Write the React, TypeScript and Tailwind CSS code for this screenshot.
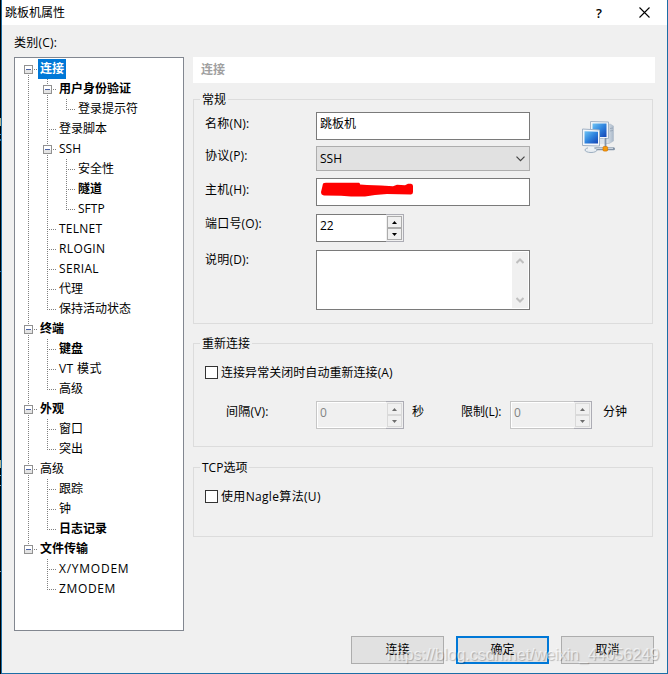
import * as React from 'react';
import clsx from 'clsx';

type Node = {
	name: string;
	bold?: boolean;
	selected?: boolean;
	className?: string;
	children?: Node[];
};

const tree: Node[] = [
	{
		name: '连接',
		selected: true,
		children: [
			{ name: '用户身份验证', bold: true, children: [{ name: '登录提示符' }] },
			{ name: '登录脚本' },
			{
				name: 'SSH',
				children: [{ name: '安全性' }, { name: '隧道', bold: true }, { name: 'SFTP' }],
			},
			{ name: 'TELNET', className: 'tracking-[.25px]' },
			{ name: 'RLOGIN', className: 'tracking-[.4px]' },
			{ name: 'SERIAL', className: 'tracking-[.35px]' },
			{ name: '代理' },
			{ name: '保持活动状态' },
		],
	},
	{
		name: '终端',
		bold: true,
		children: [
			{ name: '键盘', bold: true },
			{ name: 'VT 模式', className: 'tracking-[.4px]' },
			{ name: '高级' },
		],
	},
	{ name: '外观', bold: true, children: [{ name: '窗口' }, { name: '突出' }] },
	{
		name: '高级',
		children: [{ name: '跟踪' }, { name: '钟' }, { name: '日志记录', bold: true }],
	},
	{
		name: '文件传输',
		bold: true,
		children: [
			{ name: 'X/YMODEM', className: 'tracking-[.75px]' },
			{ name: 'ZMODEM', className: 'tracking-[.65px]' },
		],
	},
];

// one 19x20 cell of the dotted tree lines
const Cell = ({
	up,
	down,
	right,
	box,
}: {
	up?: boolean;
	down?: boolean;
	right?: boolean;
	box?: boolean;
}) => (
	<svg width="19" height="20" shapeRendering="crispEdges" className="shrink-0">
		<g stroke="#808080" strokeDasharray="1 1">
			{up && <path d="M9.5 0V11" />}
			{down && <path d="M9.5 10V20" />}
			{right && <path d="M9 10.5H19" />}
		</g>
		{box && (
			<>
				<rect x="5" y="6" width="9" height="9" fill="#919191" />
				<rect x="6" y="7" width="7" height="7" fill="#fff" />
				<rect x="6" y="11" width="7" height="3" fill="#e4e4e4" />
				<rect x="7" y="10" width="5" height="1" fill="#4b63a7" />
			</>
		)}
	</svg>
);

const Branch = ({ nodes, lines = [] }: { nodes: Node[]; lines?: boolean[] }) => (
	<>
		{nodes.map((node, i) => {
			const last = i === nodes.length - 1;
			return (
				<React.Fragment key={i}>
					<div className="flex h-5">
						{lines.map((line, j) => (
							<Cell key={j} up={line} down={line} />
						))}
						<Cell
							up={lines.length > 0 || i > 0}
							down={!last}
							right
							box={!!node.children}
						/>
						<span
							className={clsx(
								'h-5 px-0.5 leading-5 whitespace-nowrap',
								node.bold && 'font-bold',
								node.selected && 'bg-[#0078d7] font-bold text-white',
								node.className
							)}>
							{node.name}
						</span>
					</div>
					{node.children && <Branch nodes={node.children} lines={[...lines, !last]} />}
				</React.Fragment>
			);
		})}
	</>
);

const Group = ({
	title,
	className,
	children,
}: {
	title: string;
	className?: string;
	children: React.ReactNode;
}) => (
	<div className={clsx('w-[460px] border border-[#dcdcdc]', className)}>
		<div className="-mt-2.5 ml-1.5 h-[19px] w-fit bg-[#f0f0f0] px-0.5 leading-[19px]">
			{title}
		</div>
		{children}
	</div>
);

const Spin = ({
	value,
	disabled,
	className,
}: {
	value: string;
	disabled?: boolean;
	className: string;
}) => (
	<div
		className={clsx(
			'flex h-7 shrink-0 border',
			disabled
				? 'border-[#c6c6c6] bg-[#f0f0f0] text-[#838383] shadow-[inset_0_0_0_1px_#fff]'
				: 'border-[#7a7a7a] bg-white',
			className
		)}>
		<span className="flex-1 pl-[3px] leading-[22px]">{value}</span>
		<div className="-my-px -mr-px flex w-[18px] flex-col border-y border-r border-[#acacb4] bg-[#f0f0f0] p-px">
			{['M2 4H7L4.5 1Z', 'M2 1H7L4.5 4Z'].map((d) => (
				<div
					key={d}
					className={clsx(
						'flex flex-1 items-center justify-center border',
						disabled ? 'border-[#d9d9d9]' : 'border-[#acacac]'
					)}>
					<svg width="9" height="5">
						<path d={d} fill={disabled ? '#6d6d6d' : '#000'} />
					</svg>
				</div>
			))}
		</div>
	</div>
);

const Check = ({ label, className }: { label: string; className: string }) => (
	<div className="flex h-[13px] items-center gap-[3px] pl-[11px]">
		<span className="size-[13px] border border-[#333] bg-white" />
		<span className={clsx('leading-[13px] whitespace-nowrap', className)}>{label}</span>
	</div>
);

const Label = ({ children, className }: { children: string; className: string }) => (
	<span className={clsx('w-[111px] shrink-0 tracking-[.2px] whitespace-nowrap', className)}>
		{children}
	</span>
);

const Network = () => (
	<svg width="34" height="34" viewBox="0 0 34 34">
		<defs>
			<linearGradient id="screen" x1="0" y1="0" x2="1" y2="1">
				<stop offset="0" stopColor="#6fc4f4" />
				<stop offset=".5" stopColor="#2f84de" />
				<stop offset="1" stopColor="#1544b4" />
			</linearGradient>
			<linearGradient id="tower" x1="0" y1="0" x2="1" y2="0">
				<stop offset="0" stopColor="#f4f7fa" />
				<stop offset="1" stopColor="#a9b8c9" />
			</linearGradient>
		</defs>
		<path d="M23 6L28 4L31.5 6V21L27 23.5H22Z" fill="url(#tower)" stroke="#b3bfcc" strokeWidth=".7" />
		<path d="M28 8.5L31 8M28 11L31 10.5" stroke="#8c9bad" strokeWidth=".7" />
		<path d="M8.5 1.5L26.5 2V18.5L8.5 19Z" fill="#f3f6f9" stroke="#a5b4c5" />
		<path d="M10.5 3.5H24.5V17H10.5Z" fill="url(#screen)" />
		<path d="M18 20L23 18V24H16Z" fill="#dce3ea" />
		<path d="M23.5 18V29" stroke="#8294aa" strokeWidth="1.8" />
		<path d="M14 28.8H31.5" stroke="#8393a6" strokeWidth="3" strokeLinecap="round" />
		<path d="M14 28.3H31" stroke="#dce4eb" />
		<ellipse cx="9" cy="30" rx="6" ry="2.5" fill="#e8edf2" stroke="#9dafc1" />
		<path d="M6 25H12V30H6Z" fill="#eef2f5" />
		<path d="M.5 9L17.5 10V26L.5 25.5Z" fill="#f5f7fa" stroke="#a0b1c4" />
		<path d="M2.5 11.2L16 11.7V23.5H2.5Z" fill="url(#screen)" />
		<rect x="21" y="26.5" width="4.6" height="4.6" rx="1.2" fill="#f79a09" stroke="#ce7405" strokeWidth=".7" />
	</svg>
);

export default () => (
	<div className="relative flex h-[674px] w-[668px] overflow-hidden bg-[linear-gradient(#000_118px,#b5b28a_118px,#b5b28a_126px,#000_126px,#000_134px,#4d8bb8_134px,#4d8bb8_135px,#000_135px,#000_139px,#2e6d9c_139px,#2e6d9c_141px,#000_141px,#000_271px,#2e6da5_271px,#2e6da5_272px,#000_272px,#000_460px,#b5b28a_460px,#b5b28a_468px,#000_468px,#000_475px,#8aa_475px,#8aa_476px,#000_476px,#000_485px,#999_485px,#999_486px,#000_486px,#000_571px,#999_571px,#999_572px,#000_572px)] pl-px font-['Open_Sans','Noto_Sans_CJK_SC',sans-serif] text-xs text-black">
		<div className="flex w-[667px] flex-col border-x border-b border-[#1c6ea6] bg-[#f0f0f0]">
			<div className="flex h-[25px] shrink-0 items-center bg-white pl-[3px]">
				<span className="leading-6">跳板机属性</span>
				<span className="mr-[37px] ml-auto text-[13px] leading-6 font-semibold">?</span>
				<svg width="11" height="11" className="mr-[17px]" stroke="#000" strokeWidth="1.1">
					<path d="M.5 .5L10.5 10.5M10.5 .5L.5 10.5" />
				</svg>
			</div>
			<div className="flex">
				<div className="w-[191px] pl-3">
					<div className="h-8 leading-9 tracking-[.2px]">类别(C):</div>
					<div className="h-[574px] w-[170px] border border-[#828790] bg-white pt-px pl-1">
						<Branch nodes={tree} />
					</div>
				</div>
				<div className="pt-8">
					<div className="h-[26px] w-[462px] bg-white pl-2 leading-[26px] font-bold text-[#a0a0a0]">
						连接
					</div>
					<Group title="常规" className="mt-4 h-[225px]">
						<div className="flex justify-between pt-[3px] pr-[36px] pl-[11px]">
							<div>
								<div className="flex">
									<Label className="leading-[23px]">名称(N):</Label>
									<div className="h-7 w-[214px] border border-[#7a7a7a] bg-white pl-[3px] leading-[22px]">
										跳板机
									</div>
								</div>
								<div className="mt-1.5 flex">
									<Label className="leading-[19px]">协议(P):</Label>
									<div className="flex h-[25px] w-[214px] items-center justify-between border border-[#adadad] bg-[#e1e1e1] pr-1 pl-[3px]">
										SSH
										<svg width="9" height="6" fill="none" stroke="#444" strokeWidth="1.2">
											<path d="M.5 .7L4.5 4.7L8.5 .7" />
										</svg>
									</div>
								</div>
								<div className="mt-[7px] flex">
									<Label className="leading-[23px]">主机(H):</Label>
									<div className="h-7 w-[214px] border border-[#7a7a7a] bg-white pt-[3px] pl-1">
										<svg width="92" height="15">
											<path
												d="M2 1.5Q3 .8 5 .8H38Q39 1 39 2.5L46 3L60 3.5L72 4.2L76 2.8L84 3.3L87 1.8H90Q92 2 92 4V10Q92 12 90 12.5L66 12L54 13L44 14.6H30L20 13.8L3 13.5Q0 13 0 10L1 6Z"
												fill="#f00"
											/>
										</svg>
									</div>
								</div>
								<div className="mt-2 flex">
									<Label className="leading-[19px]">端口号(O):</Label>
									<Spin value="22" className="w-[88px]" />
								</div>
								<div className="mt-2 flex">
									<Label className="leading-[19px]">说明(D):</Label>
									<div className="flex h-[60px] w-[214px] justify-end border border-[#7a7a7a] bg-white p-px">
										<div className="flex w-4 flex-col items-center justify-between bg-[#f0f0f0] pt-1.5 pb-[5px]">
											<svg width="8" height="6" fill="none" stroke="#bfbfbf" strokeWidth="2">
												<path d="M.5 5L4 1.5L7.5 5" />
											</svg>
											<svg width="8" height="6" fill="none" stroke="#bfbfbf" strokeWidth="2">
												<path d="M.5 1L4 4.5L7.5 1" />
											</svg>
										</div>
									</div>
								</div>
							</div>
							<div className="pt-2">
								<Network />
							</div>
						</div>
					</Group>
					<Group title="重新连接" className="mt-[19px] h-[104px]">
						<div className="pt-[13px]">
							<Check label="连接异常关闭时自动重新连接(A)" className="tracking-[.05px]" />
							<div className="mt-[22px] flex pl-8 leading-[22px]">
								<span className="w-[90px] tracking-[.2px]">间隔(V):</span>
								<Spin value="0" disabled className="w-[88px]" />
								<span className="ml-2 w-[49px]">秒</span>
								<span className="w-[49px] whitespace-nowrap">限制(L):</span>
								<Spin value="0" disabled className="w-[82px]" />
								<span className="ml-[11px]">分钟</span>
							</div>
						</div>
					</Group>
					<Group title="TCP选项" className="mt-5 h-[70px]">
						<div className="pt-[13px]">
							<Check label="使用Nagle算法(U)" className="tracking-[.33px]" />
						</div>
					</Group>
				</div>
			</div>
			<div className="mt-[5px] flex justify-end gap-3 pr-[13px] text-center">
				<button className="h-7 w-[93px] border border-[#adadad] bg-[#e1e1e1]">连接</button>
				<button className="h-7 w-[93px] border-2 border-[#0078d7] bg-[#e1e1e1]">确定</button>
				<button className="h-7 w-[93px] border border-[#adadad] bg-[#e1e1e1]">取消</button>
			</div>
		</div>
		<div className="absolute top-[645px] left-[387px] font-['Liberation_Sans',sans-serif] text-base leading-5 whitespace-nowrap text-white/60 [text-shadow:1px_1px_1px_#00000040]">
			https://blog.csdn.net/weixin_44056249
		</div>
	</div>
);
